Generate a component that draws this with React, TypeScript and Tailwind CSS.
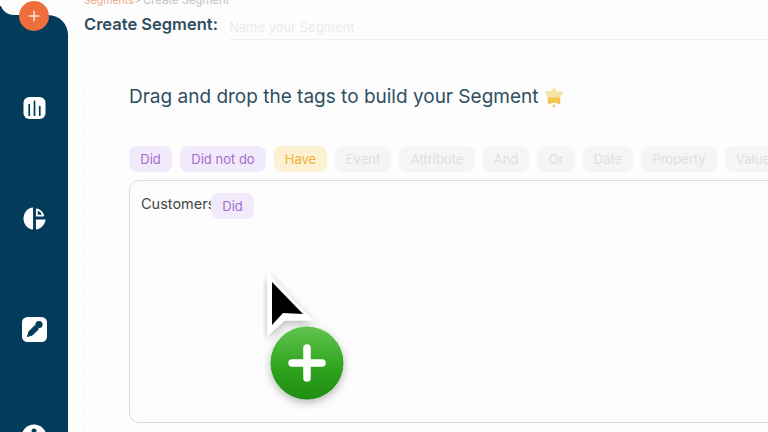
import React from "react";

const font = { fontFamily: "Inter, 'Liberation Sans', sans-serif" };

function Chip({ label, className }: { label: string; className: string }) {
  return (
    <div className={`h-[26px] shrink-0 rounded-[8px] flex items-center justify-center text-[13px] leading-none ${className}`}>
      {label}
    </div>
  );
}

const muted = "bg-[#f5f5f5] text-[#dfdfdf]";

export default function App() {
  return (
    <div style={font} className="w-[768px] h-[432px] overflow-hidden flex bg-[#fdfdfd]">
      <aside className="relative w-[68px] h-full shrink-0 flex flex-col items-center">
        <div className="absolute inset-0 top-[15px] bg-[#033c5a] rounded-tr-[20px]" />
        <div className="absolute left-0 top-[6px] w-[20px] h-[10px] bg-[#033c5a]" />
        <div className="absolute left-0 top-0 w-[28px] h-[15px] bg-[#fdfdfd] rounded-bl-[14px]" />
        <div className="absolute left-[19px] top-[1px] w-[30px] h-[30px] rounded-full bg-[#ee6f3c] flex items-center justify-center">
          <svg viewBox="0 0 12 12" className="w-[12px] h-[12px]">
            <path d="M6 1.200v9.600M1.200 6h9.600" stroke="#fde6d8" strokeWidth="1.500" strokeLinecap="round" />
          </svg>
        </div>
        <div className="relative mt-[97px] flex flex-col items-center">
          <svg viewBox="0 0 23 23" className="w-[23px] h-[22px]">
            <rect width="23" height="23" rx="6" fill="#fff" />
            <path d="M6 8v11M11.500 4.500V19M17 10v9" stroke="#033c5a" strokeWidth="1.800" strokeLinecap="round" />
          </svg>
          <svg viewBox="0 0 24 24" className="w-[23px] h-[23px] mt-[88px]">
            <path d="M10.500 .5v23C5 23.500.5 18 .5 12S5 .500 10.500 .5Z" fill="#fff" />
            <path d="M14.500 2.500c3.200.8 5.600 3.200 6.500 6.500h-6.500Z" fill="none" stroke="#fff" strokeWidth="2" strokeLinejoin="round" />
            <path d="M13.500 13h10c-.5 5.500-4.800 10-10 10.500Z" fill="#fff" />
          </svg>
          <svg viewBox="0 0 25 25" className="w-[25px] h-[25px] mt-[87px]">
            <rect width="25" height="25" rx="5.500" fill="#fff" />
            <path d="M5.500 19.500 7 14.500 13 8.500 16.500 12 10.500 18Z" fill="#033c5a" stroke="#033c5a" strokeWidth="1" strokeLinejoin="round" />
            <circle cx="17" cy="7.500" r="3.600" fill="#033c5a" />
          </svg>
          <svg viewBox="0 0 26 26" className="w-[26px] h-[26px] mt-[82px]">
            <circle cx="13" cy="13" r="12.500" fill="#fff" />
            <circle cx="13" cy="7" r="2.500" fill="#033c5a" />
          </svg>
        </div>
      </aside>

      <main className="relative flex-1 min-w-0 pl-[15px]">
        <div className="-mt-[5px] ml-px h-[12px] flex items-center text-[11.300px] leading-none text-[#c2c2c2]">
          <span className="text-[#f0a384] text-[10.500px] w-[44px] whitespace-nowrap">Segments</span>
          <span className="ml-[6px] w-[9px]">&gt;</span>
          <span>Create Segment</span>
        </div>
        <div className="mt-[4px] ml-px flex items-start">
          <h1 className="text-[16.500px] leading-[24px] font-semibold text-[#2f4f61] mt-[1px]">Create Segment:</h1>
          <div className="ml-[11px] flex-1 h-[28px] mt-[1px] pt-[7px] border-b border-[#f0f0f0] text-[13px] leading-[16px] text-[#ebebeb]">
            Name your Segment
          </div>
        </div>

        <section className="mt-[29px] h-[400px] w-[720px] border border-dashed border-[#f5f5f5] rounded-[16px] pl-[45px] pt-[14px]">
          <div className="flex items-center gap-[5px] h-[26px]">
            <h2 className="text-[19px] leading-[26px] font-normal text-[#2f4f61]">Drag and drop the tags to build your Segment</h2>
            <svg viewBox="0 0 20 22" className="w-[20px] h-[22px] ml-px">
              <path d="M10 1.500c1 0 1.500 2.500 2.500 3.500S17 5 18.500 5.500 17 9.500 16 11.500s1 5.500 0 6.500-4-1.500-6-1.500-5 2.500-6 1.500 1-4 0-6.500-3.500-5-2.500-6S6.500 6 7.500 5 9 1.500 10 1.500Z" fill="#f7e3a4" />
              <path d="M3.500 11.500h13l-.5 6.500-6-1.500-6 1.500Z" fill="#f2c64e" />
              <circle cx="10" cy="20" r="1.500" fill="#f0c878" />
            </svg>
          </div>

          <div className="mt-[36px] flex gap-[8px] w-[700px]">
            <Chip label="Did" className="w-[43px] bg-[#f1eafa] text-[#a66bd0]" />
            <Chip label="Did not do" className="w-[86px] bg-[#f1eafa] text-[#a66bd0]" />
            <Chip label="Have" className="w-[53px] bg-[#fdf1d3] text-[#efb23c]" />
            <Chip label="Event" className={`w-[56px] ${muted}`} />
            <Chip label="Attribute" className={`w-[76px] ${muted}`} />
            <Chip label="And" className={`w-[46px] ${muted}`} />
            <Chip label="Or" className={`w-[38px] ${muted}`} />
            <Chip label="Date" className={`w-[50px] ${muted}`} />
            <Chip label="Property" className={`w-[76px] ${muted}`} />
            <Chip label="Value" className={`w-[56px] ${muted}`} />
          </div>

          <div className="relative mt-[8px] w-[680px] h-[243px] border border-[#dcdcdc] rounded-[10px] pl-[11px] pt-[13px]">
            <div className="w-[72px] overflow-hidden whitespace-nowrap text-[14.500px] leading-[20px] text-[#444444]">Customers</div>
            <Chip label="Did" className="absolute left-[81px] top-[12px] w-[43px] bg-[#f1eafa] text-[#a66bd0]" />
          </div>
        </section>

        <svg viewBox="0 0 100 145" className="absolute left-[195px] top-[270px] w-[100px] h-[145px]">
          <defs>
            <linearGradient id="g" x1="0" y1="0" x2="0" y2="1">
              <stop offset="0" stopColor="#62c44f" />
              <stop offset="0.55" stopColor="#2fa51f" />
              <stop offset="1" stopColor="#1f8c14" />
            </linearGradient>
            <filter id="s" x="-30%" y="-30%" width="160%" height="160%">
              <feDropShadow dx="0" dy="3" stdDeviation="4" floodColor="#000" floodOpacity="0.28" />
            </filter>
          </defs>
          <path d="M5 4 L5 65 L22 50 L49 50 Z" fill="#fff" stroke="#fff" strokeWidth="1" strokeLinejoin="round" filter="url(#s)" />
          <path d="M9 12 L9 55 L20 43 L40 44 Z" fill="#000" />
          <circle cx="44" cy="93" r="36.500" fill="url(#g)" filter="url(#s)" />
          <path d="M44 78v30M29 93h30" stroke="#fff" strokeWidth="7.500" strokeLinecap="round" />
        </svg>
      </main>
    </div>
  );
}
